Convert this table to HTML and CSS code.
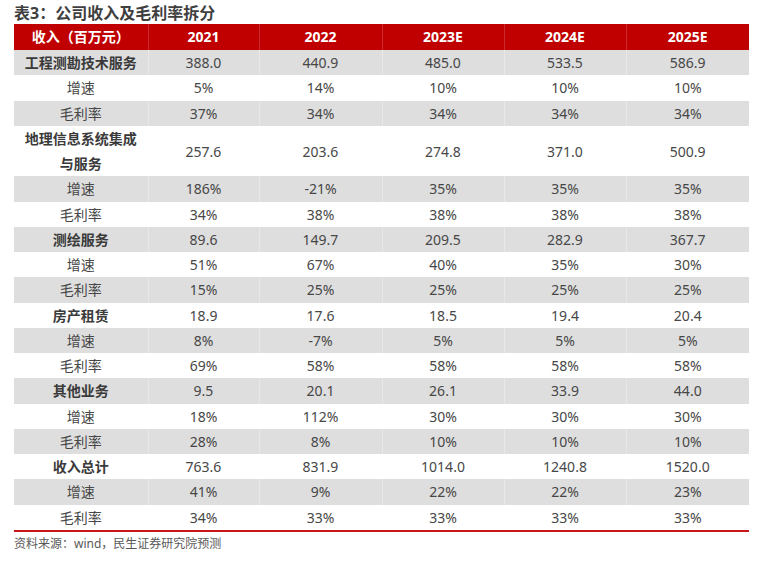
FILE: index.html
```html
<!DOCTYPE html>
<html lang="zh">
<head>
<meta charset="utf-8">
<link rel="stylesheet" href="styles.css">
</head>
<body>
<div class="page">
  <div class="title">表3：公司收入及毛利率拆分</div>
  <table class="tbl">
    <colgroup>
      <col class="c0"><col class="c1"><col class="c2"><col class="c3"><col class="c4"><col class="c5">
    </colgroup>
    <thead>
      <tr><th>收入（百万元）</th><th>2021</th><th>2022</th><th>2023E</th><th>2024E</th><th>2025E</th></tr>
    </thead>
    <tbody>
      <tr><td class="cat">工程测勘技术服务</td><td>388.0</td><td>440.9</td><td>485.0</td><td>533.5</td><td>586.9</td></tr>
      <tr><td>增速</td><td>5%</td><td>14%</td><td>10%</td><td>10%</td><td>10%</td></tr>
      <tr><td>毛利率</td><td>37%</td><td>34%</td><td>34%</td><td>34%</td><td>34%</td></tr>
      <tr class="dbl"><td class="cat">地理信息系统集成与服务</td><td>257.6</td><td>203.6</td><td>274.8</td><td>371.0</td><td>500.9</td></tr>
      <tr><td>增速</td><td>186%</td><td>-21%</td><td>35%</td><td>35%</td><td>35%</td></tr>
      <tr><td>毛利率</td><td>34%</td><td>38%</td><td>38%</td><td>38%</td><td>38%</td></tr>
      <tr><td class="cat">测绘服务</td><td>89.6</td><td>149.7</td><td>209.5</td><td>282.9</td><td>367.7</td></tr>
      <tr><td>增速</td><td>51%</td><td>67%</td><td>40%</td><td>35%</td><td>30%</td></tr>
      <tr><td>毛利率</td><td>15%</td><td>25%</td><td>25%</td><td>25%</td><td>25%</td></tr>
      <tr><td class="cat">房产租赁</td><td>18.9</td><td>17.6</td><td>18.5</td><td>19.4</td><td>20.4</td></tr>
      <tr><td>增速</td><td>8%</td><td>-7%</td><td>5%</td><td>5%</td><td>5%</td></tr>
      <tr><td>毛利率</td><td>69%</td><td>58%</td><td>58%</td><td>58%</td><td>58%</td></tr>
      <tr><td class="cat">其他业务</td><td>9.5</td><td>20.1</td><td>26.1</td><td>33.9</td><td>44.0</td></tr>
      <tr><td>增速</td><td>18%</td><td>112%</td><td>30%</td><td>30%</td><td>30%</td></tr>
      <tr><td>毛利率</td><td>28%</td><td>8%</td><td>10%</td><td>10%</td><td>10%</td></tr>
      <tr><td class="cat">收入总计</td><td>763.6</td><td>831.9</td><td>1014.0</td><td>1240.8</td><td>1520.0</td></tr>
      <tr><td>增速</td><td>41%</td><td>9%</td><td>22%</td><td>22%</td><td>23%</td></tr>
      <tr><td>毛利率</td><td>34%</td><td>33%</td><td>33%</td><td>33%</td><td>33%</td></tr>
    </tbody>
  </table>
  <div class="source">资料来源：wind，民生证券研究院预测</div>
</div>
</body>
</html>
```

FILE: styles.css
```css
html, body {
  margin: 0;
  padding: 0;
  background: #ffffff;
}

.page {
  padding: 0 0 0 14px;
  font-family: "Noto Sans", "Noto Sans CJK SC", sans-serif;
  color: #404040;
}

.title {
  font-size: 16px;
  font-weight: 700;
  line-height: 22px;
  padding-top: 2px;
  color: #3f3f3f;
}

.tbl {
  border-collapse: collapse;
  table-layout: fixed;
  width: 735px;
  font-size: 14px;
}

.c0 { width: 134px; }
.c1 { width: 111px; }
.c2 { width: 123px; }
.c3 { width: 122px; }
.c4 { width: 122px; }
.c5 { width: 123px; }

.tbl th {
  background: #c00000;
  color: #ffffff;
  font-weight: 700;
  height: 26px;
  padding: 0;
  line-height: 26px;
  text-align: center;
  border-left: 1px solid #cc2a2a;
}

.tbl th:first-child,
.tbl td:first-child {
  border-left: none;
}

.tbl td {
  height: 25.26px;
  padding: 0 6px;
  line-height: 25px;
  text-align: center;
  font-weight: 400;
  color: #474747;
  border-left: 1px solid #e8e8e8;
}

.tbl tbody tr:nth-child(odd) td {
  background: #dedede;
}

.tbl tbody tr:nth-child(even) td {
  border-left-color: #ffffff;
}

.tbl tr.dbl td {
  height: 50.5px;
}

.tbl td.cat {
  font-weight: 700;
  color: #3a3a3a;
}

.tbl tbody tr:last-child td {
  border-bottom: 2px solid #c8161b;
}

.source {
  font-size: 12px;
  line-height: 24px;
  color: #595959;
}
```
